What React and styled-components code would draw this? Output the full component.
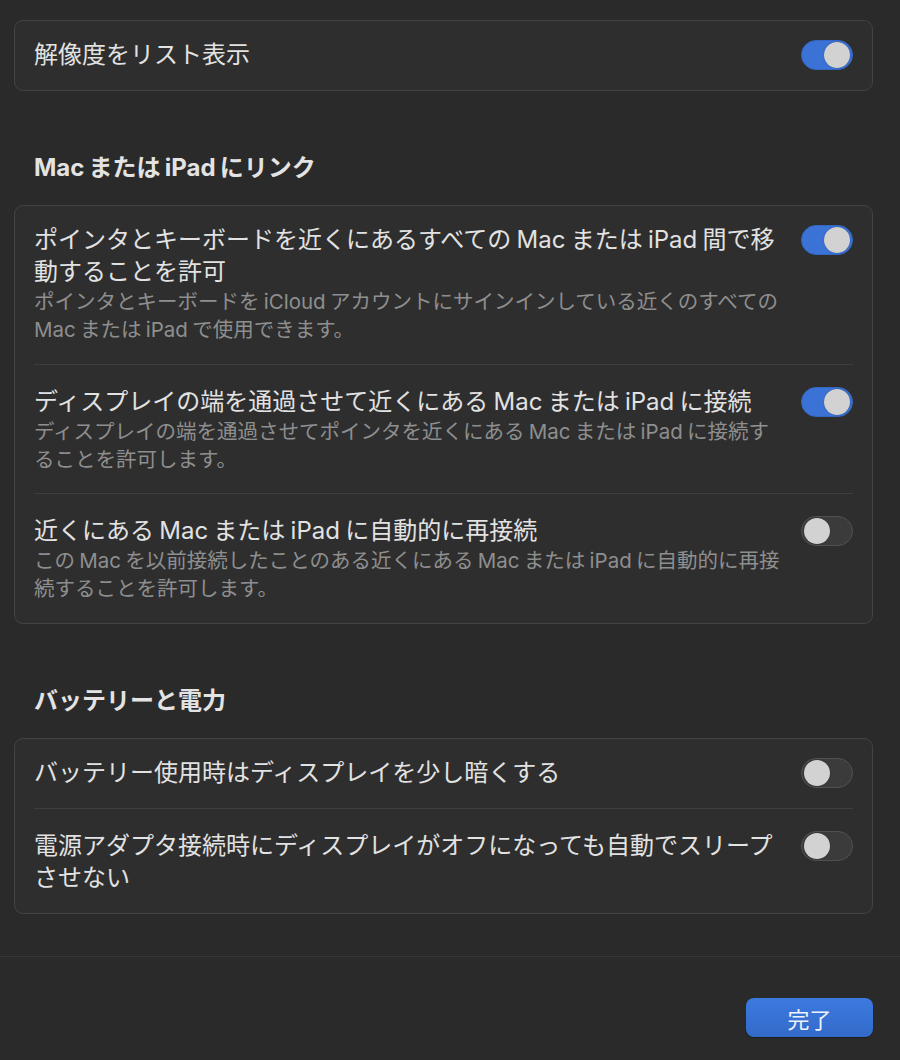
import styled, { createGlobalStyle } from "styled-components";

const GlobalStyle = createGlobalStyle`
  body {
    margin: 0;
    background: #2a2a2a;
    font-family: Inter, "Noto Sans CJK JP", sans-serif;
    -webkit-font-smoothing: antialiased;
  }
`;

const Page = styled.div`
  min-height: 1060px;
  display: flex;
  flex-direction: column;
  background: #2a2a2a;
`;

const Content = styled.main`
  flex: 1;
  padding: 20px 27px 0 14px;
  display: flex;
  flex-direction: column;
`;

const Section = styled.section`
  display: flex;
  flex-direction: column;
  gap: 21px;
  margin-top: ${(p) => (p.$first ? 0 : "61px")};
`;

const SectionTitle = styled.h2`
  margin: 0;
  padding-left: 20px;
  font-size: 24px;
  line-height: 32px;
  font-weight: 700;
  word-spacing: -1.5px;
  color: #e3e3e3;
`;

const Card = styled.div`
  background: #2e2e2e;
  border: 1px solid #434343;
  border-radius: 9px;
  padding: 0 19px;
`;

const Row = styled.div`
  display: flex;
  align-items: flex-start;
  gap: 12px;
  padding: 21px 0 19px;

  &:first-child {
    padding-top: 18px;
  }

  & + & {
    border-top: 1px solid #3e3e3e;
  }
`;

const RowText = styled.div`
  flex: 1;
  min-width: 0;
  padding-right: 2px;
  word-spacing: -1.5px;
`;

const RowTitle = styled.div`
  font-size: 24px;
  line-height: 32px;
  color: #e2e2e2;
`;

const RowDesc = styled.div`
  font-size: 20.5px;
  line-height: 28.3px;
  color: #8e8e8e;
`;

const Track = styled.div`
  flex: none;
  width: 52px;
  height: 30px;
  margin-top: 1px;
  box-sizing: border-box;
  border-radius: 15px;
  display: flex;
  align-items: center;
  justify-content: ${(p) => (p.$on ? "flex-end" : "flex-start")};
  padding: 0 2px;
  background: ${(p) => (p.$on ? "#3a72d6" : "#3b3b3b")};
  border: 1px solid ${(p) => (p.$on ? "#3566c0" : "#515151")};
`;

const Knob = styled.div`
  width: 26px;
  height: 26px;
  border-radius: 50%;
  background: #d2d2d2;
  box-shadow: 0 0 1px rgba(0, 0, 0, 0.5);
`;

const Footer = styled.footer`
  margin-top: 41px;
  border-top: 1px solid #373737;
  padding: 41px 27px 23px 14px;
  display: flex;
  justify-content: flex-end;
`;

const DoneButton = styled.button`
  width: 127px;
  height: 39px;
  border: none;
  border-radius: 8px;
  background: linear-gradient(#3c7ae0, #336ac9);
  box-shadow: 0 1px 1px rgba(0, 0, 0, 0.35);
  color: #eef2fb;
  font-family: inherit;
  font-size: 22px;
  cursor: pointer;
`;

const sections = [
  {
    rows: [{ title: "解像度をリスト表示", on: true }],
  },
  {
    title: "Mac または iPad にリンク",
    rows: [
      {
        title:
          "ポインタとキーボードを近くにあるすべての Mac または iPad 間で移動することを許可",
        desc: "ポインタとキーボードを iCloud アカウントにサインインしている近くのすべての Mac または iPad で使用できます。",
        on: true,
      },
      {
        title: "ディスプレイの端を通過させて近くにある Mac または iPad に接続",
        desc: "ディスプレイの端を通過させてポインタを近くにある Mac または iPad に接続することを許可します。",
        on: true,
      },
      {
        title: "近くにある Mac または iPad に自動的に再接続",
        desc: "この Mac を以前接続したことのある近くにある Mac または iPad に自動的に再接続することを許可します。",
        on: false,
      },
    ],
  },
  {
    title: "バッテリーと電力",
    rows: [
      { title: "バッテリー使用時はディスプレイを少し暗くする", on: false },
      {
        title:
          "電源アダプタ接続時にディスプレイがオフになっても自動でスリープさせない",
        on: false,
      },
    ],
  },
];

function Switch({ on }) {
  return (
    <Track $on={on}>
      <Knob />
    </Track>
  );
}

export default function App() {
  return (
    <Page>
      <GlobalStyle />
      <Content>
        {sections.map((section, i) => (
          <Section key={i} $first={i === 0}>
            {section.title && <SectionTitle>{section.title}</SectionTitle>}
            <Card>
              {section.rows.map((row) => (
                <Row key={row.title}>
                  <RowText>
                    <RowTitle>{row.title}</RowTitle>
                    {row.desc && <RowDesc>{row.desc}</RowDesc>}
                  </RowText>
                  <Switch on={row.on} />
                </Row>
              ))}
            </Card>
          </Section>
        ))}
      </Content>
      <Footer>
        <DoneButton>完了</DoneButton>
      </Footer>
    </Page>
  );
}
